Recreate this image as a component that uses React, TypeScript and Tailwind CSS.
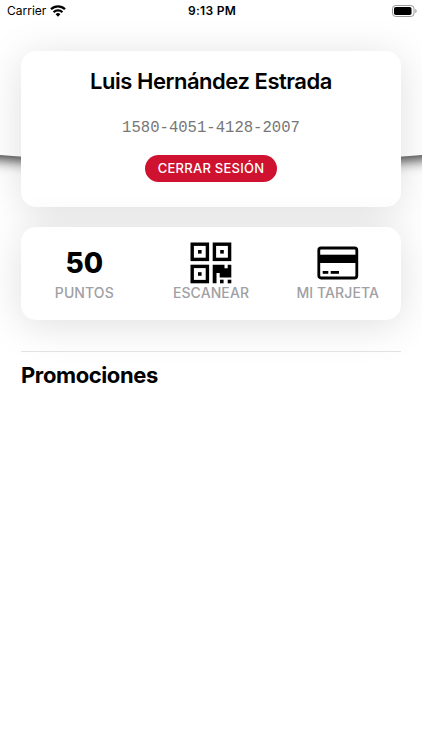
import type { ReactNode } from "react";

const USER = {
  name: "Luis Hernández Estrada",
  card: "1580-4051-4128-2007",
  points: 50,
};

function WifiIcon() {
  return (
    <svg width="16" height="12" viewBox="0 0 16 12" fill="none" stroke="#000" strokeWidth="2.3">
      <path d="M1 4.2a10 10 0 0 1 14 0" />
      <path d="M3.6 7.2a6.2 6.2 0 0 1 8.8 0" />
      <path d="M8 11.7 5.6 9.3a3.4 3.4 0 0 1 4.8 0z" fill="#000" stroke="none" />
    </svg>
  );
}

function BatteryIcon() {
  return (
    <svg width="25" height="12" viewBox="0 0 25 12">
      <rect x="0.5" y="0.5" width="21.5" height="11" rx="3.2" fill="none" stroke="#999" />
      <rect x="2" y="2" width="17.5" height="8" rx="1.8" fill="#000" />
      <path d="M23.3 4v4c.9-.3 1.3-1.1 1.3-2s-.4-1.7-1.3-2z" fill="#999" />
    </svg>
  );
}

function QrIcon() {
  return (
    <svg width="42" height="42" viewBox="0 0 42 42" fill="#000">
      <g fill="none" stroke="#000" strokeWidth="3.4">
        <rect x="2.2" y="2.2" width="15.2" height="15.2" />
        <rect x="24.4" y="2.2" width="15.2" height="15.2" />
        <rect x="2.2" y="24.4" width="15.2" height="15.2" />
      </g>
      <rect x="8" y="8" width="3.6" height="3.6" />
      <rect x="30.2" y="8" width="3.6" height="3.6" />
      <rect x="8" y="30.2" width="3.6" height="3.6" />
      <path d="M22.7 22.7h11.8v3.5h3.2v-3.5h3.6v12.8H29.7v-4.5h-3.2v10.3h-3.8z" />
      <rect x="30" y="37.7" width="3.6" height="3.6" />
      <rect x="37.7" y="37.7" width="3.6" height="3.6" />
    </svg>
  );
}

function CardIcon() {
  return (
    <svg width="42" height="34" viewBox="0 0 42 34" fill="#000">
      <rect x="1.8" y="2" width="38" height="30" rx="2.2" fill="none" stroke="#000" strokeWidth="2.8" />
      <rect x="1" y="8.7" width="39.5" height="8.3" />
      <rect x="5.7" y="25" width="5.6" height="2.8" />
      <rect x="13.7" y="25" width="8.3" height="2.8" />
    </svg>
  );
}

function Action({ label, children }: { label: string; children: ReactNode }) {
  return (
    <button className="flex flex-1 flex-col items-center">
      <span className="flex h-[42px] items-center justify-center">{children}</span>
      <span className="text-[14px] leading-[18px] font-medium tracking-[0.1px] whitespace-nowrap text-[#a0a0a5]">{label}</span>
    </button>
  );
}

export default function App() {
  return (
    <div className="relative isolate h-[750px] overflow-hidden bg-white font-['Inter',sans-serif] text-black">
      {/* Curved header behind the cards */}
      <div className="absolute -left-[50px] top-[-100px] -z-10 h-[262px] w-[522px] rounded-b-[50%_17px] bg-white shadow-[0_4px_14px_rgba(0,0,0,0.8)]" />

      <header className="grid h-[22px] grid-cols-3 items-center pr-[5px] pl-[7px] text-[12px]">
        <div className="flex items-center gap-1">
          <span>Carrier</span>
          <WifiIcon />
        </div>
        <span className="text-center text-[12px] font-semibold tracking-[0.3px] whitespace-nowrap">9:13 PM</span>
        <div className="flex justify-end">
          <BatteryIcon />
        </div>
      </header>

      <main className="px-[21px] pt-[29px]">
        <section className="flex h-[156px] flex-col items-center rounded-[15px] bg-white pt-[15px] shadow-[0_5px_40px_rgba(0,0,0,0.13)]">
          <h1 className="text-[22px] leading-[30px] font-semibold tracking-[-0.47px]">{USER.name}</h1>
          <p className="mt-[23px] font-['Liberation_Mono',monospace] text-[15.6px] leading-[18px] text-[#777]">{USER.card}</p>
          <button className="mt-[18px] h-[27px] w-[132px] rounded-full bg-[#ce1230] text-[13px] font-medium tracking-[0.25px] text-white">
            CERRAR SESIÓN
          </button>
        </section>

        <section className="mt-5 flex h-[93px] rounded-[15px] bg-white pt-[15px] shadow-[0_5px_40px_rgba(0,0,0,0.13)]">
          <Action label="PUNTOS">
            <span className="text-[28px] font-extrabold">{USER.points}</span>
          </Action>
          <Action label="ESCANEAR">
            <QrIcon />
          </Action>
          <Action label="MI TARJETA">
            <CardIcon />
          </Action>
        </section>

        <section className="mt-[31px] border-t border-[#e2e2e4] pt-[8px]">
          <h2 className="text-[22px] leading-[30px] font-bold tracking-[-0.4px]">Promociones</h2>
        </section>
      </main>
    </div>
  );
}
